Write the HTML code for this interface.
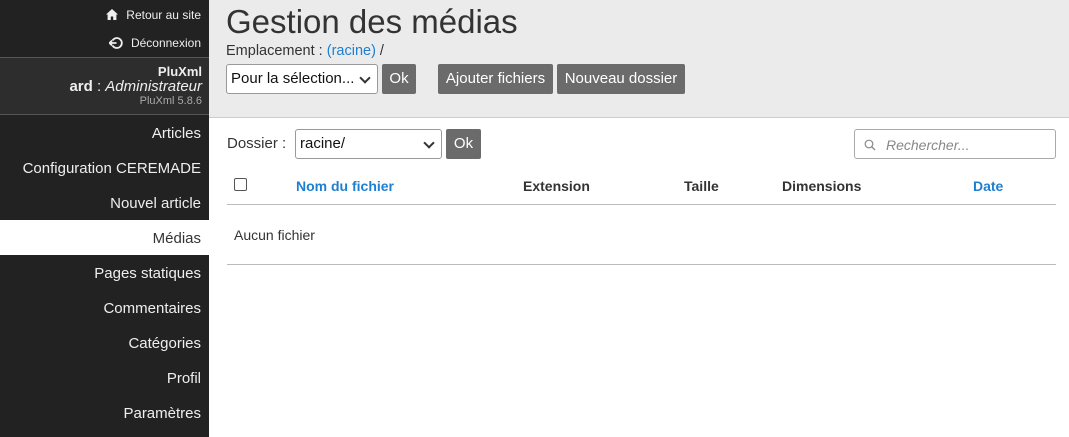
<!DOCTYPE html>
<html><head><meta charset="utf-8"><style>
*{box-sizing:border-box;margin:0;padding:0}
body{width:1069px;height:437px;overflow:hidden;font-family:"Liberation Sans",Arial,sans-serif;background:#fff;position:relative;color:#333}
.sb{position:absolute;left:0;top:0;width:209px;height:437px;background:#222;color:#eee}
.tl{position:absolute;right:8px;font-size:12px;color:#eee}
.prof{position:absolute;left:0;top:57px;width:209px;height:58px;background:#2d2d2d;border-top:1px solid #555;border-bottom:1px solid #555;text-align:right;padding:6px 7px 0 0;line-height:15px}
.m{position:absolute;left:0;width:209px;height:35px;line-height:37px;text-align:right;padding-right:8px;font-size:15px;color:#eee}
.m.a{background:#fff;color:#333}
.hd{position:absolute;left:209px;top:0;width:860px;height:118px;background:#ebebeb;border-bottom:1px solid #ccc}
h1{position:absolute;left:17px;top:3px;font-size:33px;font-weight:normal;color:#333}
.sel{position:absolute;height:30px;border:1px solid #999;border-radius:3px;background:#fff;font-size:15px;line-height:28px;padding-left:4px;color:#111}
.sel:after{content:"";position:absolute;right:8px;top:9px;width:6px;height:6px;border-right:2px solid #333;border-bottom:2px solid #333;transform:rotate(45deg)}
.btn{position:absolute;height:30px;background:#6b6b6b;color:#fff;border-radius:2px;font-size:15px;line-height:30px;text-align:center}
.th{position:absolute;top:178px;font-size:14px;font-weight:bold;color:#333}
.blue,.th.blue{color:#1e7fd1}
</style></head><body>
<div class="sb">
<div class="tl" style="top:8px"><svg width="12" height="11" viewBox="0 0 12 11" style="vertical-align:-1px;margin-right:8px"><path d="M6 0L0 5.5h1.6V11h3.2V7.5h2.4V11h3.2V5.5H12z" fill="#eee"/></svg>Retour au site</div>
<div class="tl" style="top:36px"><svg width="14" height="12" viewBox="0 0 14 12" style="vertical-align:-2px;margin-right:8px"><path d="M3.5 3.5A5 5 0 1 1 3.5 8.5" fill="none" stroke="#eee" stroke-width="1.8"/><path d="M0.5 6h7M3 3.5L0.5 6 3 8.5" fill="none" stroke="#eee" stroke-width="1.8"/></svg>Déconnexion</div>
<div class="prof"><div style="font-size:13px;font-weight:bold">PluXml</div><div style="font-size:15px"><b>ard</b> : <i>Administrateur</i></div><div style="font-size:11px;color:#aaa">PluXml 5.8.6</div></div>
<div class="m" style="top:115px">Articles</div>
<div class="m" style="top:150px">Configuration CEREMADE</div>
<div class="m" style="top:185px">Nouvel article</div>
<div class="m a" style="top:220px">Médias</div>
<div class="m" style="top:255px">Pages statiques</div>
<div class="m" style="top:290px">Commentaires</div>
<div class="m" style="top:325px">Catégories</div>
<div class="m" style="top:360px">Profil</div>
<div class="m" style="top:395px">Paramètres</div>
</div>
<div class="hd">
<h1>Gestion des médias</h1>
<div style="position:absolute;left:17px;top:43px;font-size:14.5px">Emplacement : <span class="blue">(racine)</span> /</div>
<div class="sel" style="left:17px;top:64px;width:152px">Pour la sélection...</div>
<div class="btn" style="left:173px;top:64px;width:34px">Ok</div>
<div class="btn" style="left:229px;top:64px;width:115px">Ajouter fichiers</div>
<div class="btn" style="left:348px;top:64px;width:128px">Nouveau dossier</div>
</div>
<div style="position:absolute;left:227px;top:135px;font-size:15px">Dossier :</div>
<div class="sel" style="left:295px;top:129px;width:147px">racine/</div>
<div class="btn" style="left:446px;top:129px;width:35px">Ok</div>
<div style="position:absolute;left:854px;top:129px;width:202px;height:30px;border:1px solid #aaa;border-radius:3px;background:#fff">
<svg width="12" height="12" viewBox="0 0 12 12" style="position:absolute;left:9px;top:9px"><circle cx="5" cy="5" r="3.8" fill="none" stroke="#888" stroke-width="1.2"/><path d="M7.8 7.8L11 11" stroke="#888" stroke-width="1.3"/></svg>
<span style="position:absolute;left:31px;top:7px;font-size:14px;font-style:italic;color:#888">Rechercher...</span></div>
<div style="position:absolute;left:234px;top:178px;width:13px;height:13px;border:1px solid #555;border-radius:2px"></div>
<div class="th blue" style="left:296px">Nom du fichier</div>
<div class="th" style="left:523px">Extension</div>
<div class="th" style="left:684px">Taille</div>
<div class="th" style="left:782px">Dimensions</div>
<div class="th blue" style="left:973px">Date</div>
<div style="position:absolute;left:227px;top:204px;width:829px;height:1px;background:#bbb"></div>
<div style="position:absolute;left:234px;top:227px;font-size:14px">Aucun fichier</div>
<div style="position:absolute;left:227px;top:264px;width:829px;height:1px;background:#bbb"></div>
</body></html>
